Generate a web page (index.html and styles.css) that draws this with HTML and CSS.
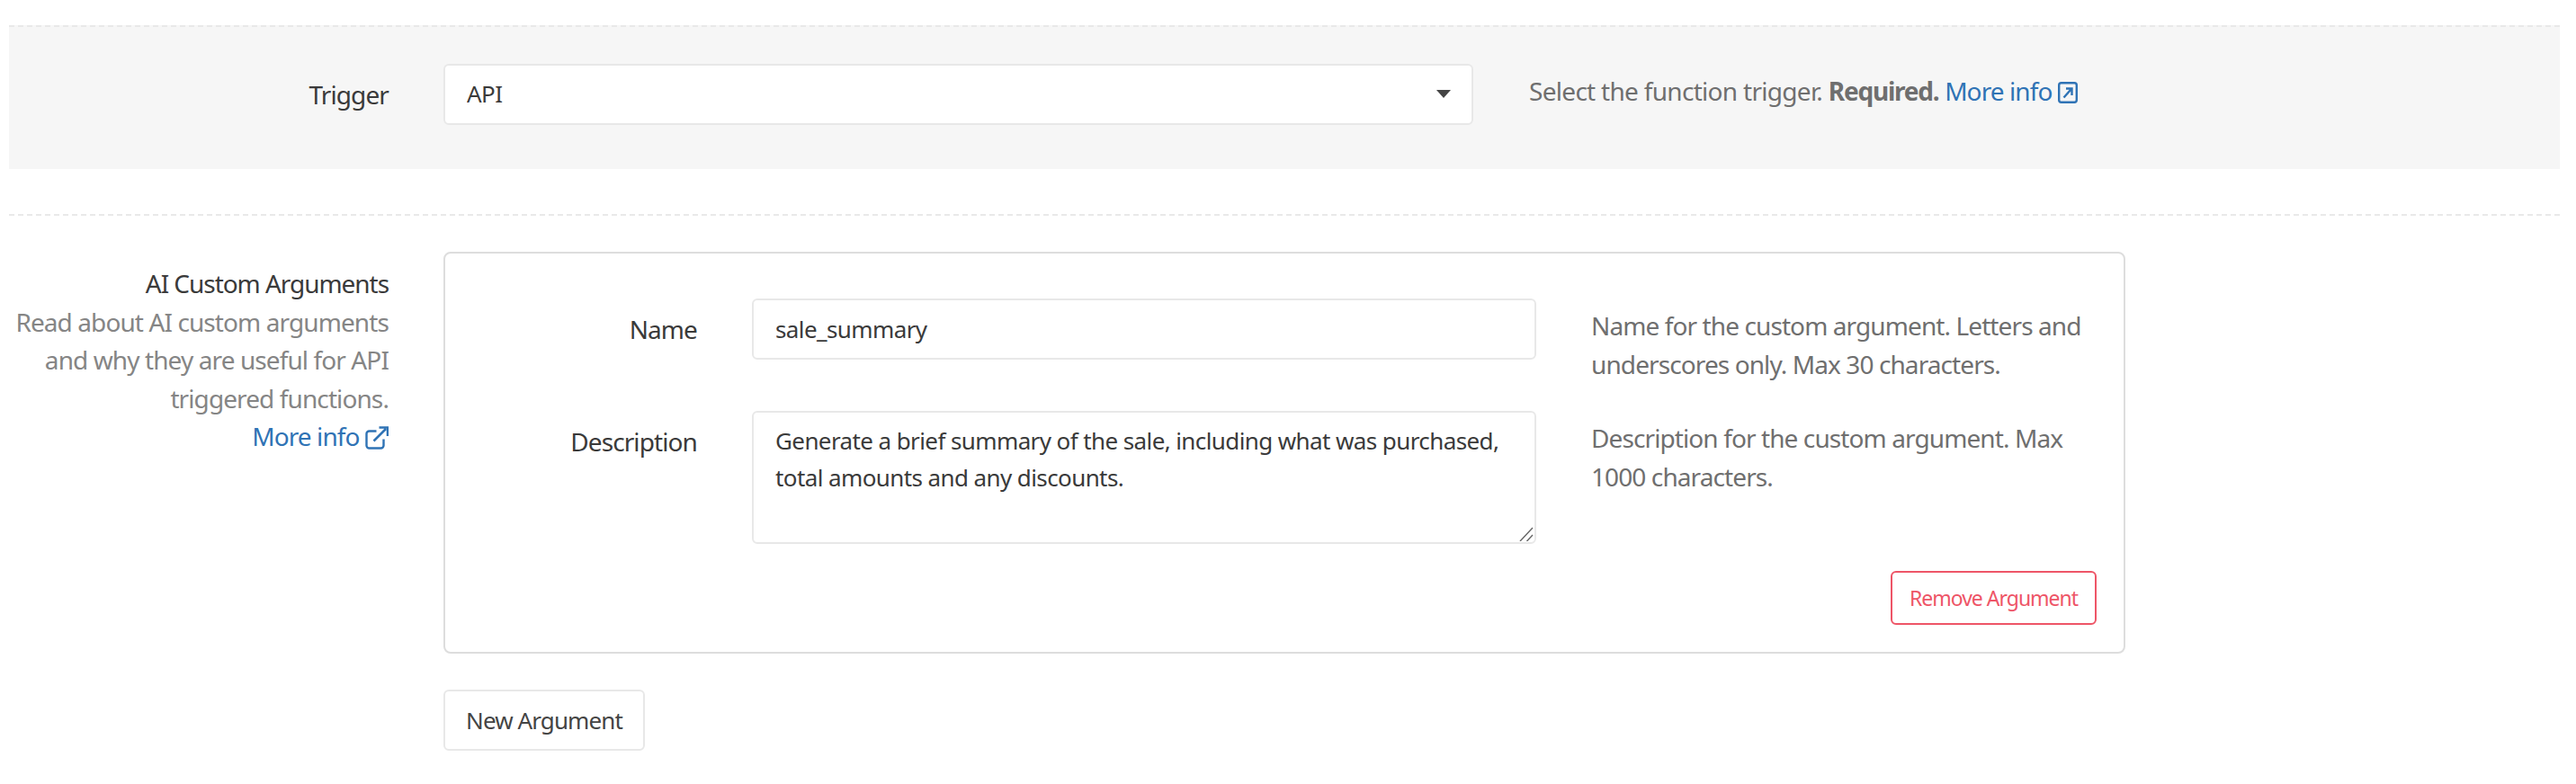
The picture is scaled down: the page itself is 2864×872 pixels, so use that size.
FILE: index.html
```html
<!DOCTYPE html>
<html lang="en">
<head>
<meta charset="utf-8">
<title>Function settings</title>
<link rel="stylesheet" href="styles.css">
</head>
<body>
<section class="row row-panel">
  <label class="side-label" for="trigger">Trigger</label>
  <div class="select-wrap">
    <select id="trigger" class="control control-select"><option>API</option></select>
  </div>
  <p class="help help-top">Select the function trigger. <strong>Required.</strong> <a href="#">More info <svg class="icon-square" viewBox="0 0 22 24" aria-hidden="true"><rect x="1.2" y="1.2" width="19.6" height="21.6" rx="2.5" fill="none" stroke="currentColor" stroke-width="2.4"/><path d="M6.5 17.5 14.5 8.5M9 7.5h6.5V15" fill="none" stroke="currentColor" stroke-width="2.4"/></svg></a></p>
</section>
<section class="row row-args">
  <div class="side-label side-block">
    <div class="side-title">AI Custom Arguments</div>
    <div class="side-note">Read about AI custom arguments and why they are useful for API triggered functions.</div>
    <a href="#">More info <svg class="icon-open" viewBox="0 0 26 26" aria-hidden="true"><path d="M20.5 14.5v7a3 3 0 0 1-3 3H4.5a3 3 0 0 1-3-3V8.5a3 3 0 0 1 3-3h8" fill="none" stroke="currentColor" stroke-width="2.4"/><path d="M9.5 16.5 23 3M15.5 1.5H25V11" fill="none" stroke="currentColor" stroke-width="2.6"/></svg></a>
  </div>
  <div class="args-col">
    <div class="card">
      <div class="field">
        <label class="field-label" for="argname">Name</label>
        <input id="argname" class="control" type="text" value="sale_summary">
        <p class="help">Name for the custom argument. Letters and underscores only. Max 30 characters.</p>
      </div>
      <div class="field field-desc">
        <label class="field-label" for="argdesc">Description</label>
        <div class="area-wrap">
          <textarea id="argdesc" class="control area">Generate a brief summary of the sale, including what was purchased, total amounts and any discounts.</textarea>
          <svg class="grip" viewBox="0 0 16 16" aria-hidden="true"><path d="M1 16 15 1M8.5 16 15 9" fill="none" stroke="#666" stroke-width="1.4"/></svg>
        </div>
        <p class="help">Description for the custom argument. Max 1000 characters.</p>
      </div>
      <div class="card-actions">
        <button class="btn btn-danger" type="button">Remove Argument</button>
      </div>
    </div>
    <button class="btn btn-new" type="button">New Argument</button>
  </div>
</section>
</body>
</html>
```
FILE: styles.css
```css
* { box-sizing: border-box; }
html, body { margin: 0; background: #fff; }
body {
  padding-top: 28px;
  font-family: "Noto Sans", "Open Sans", sans-serif;
  font-size: 28px;
  line-height: 42.6px;
  color: #3a3a3a;
  letter-spacing: -0.9px;
}
a { color: #2f73b5; text-decoration: none; }
.row {
  display: flex;
  align-items: flex-start;
  margin-left: 10px;
  margin-right: 18px;
  border-top: 2px dashed #e9e9e9;
}
.row-panel {
  height: 160px;
  padding-top: 41px;
  background: #f6f6f6;
}
.row-args {
  margin-top: 50px;
  padding-top: 40px;
}
.side-label {
  flex: 0 0 422px;
  margin-right: 61px;
  text-align: right;
}
.row-panel .side-label { padding-top: 13px; }
.side-title { letter-spacing: -1.05px; }
.side-note { color: #858585; }
.side-block { margin-top: 14px; }
.control {
  display: block;
  width: 100%;
  height: 68px;
  padding: 0 24px;
  border: 2px solid #e8e8e8;
  border-radius: 6px;
  background: #fff;
  font: inherit;
  font-size: 26px;
  letter-spacing: -0.6px;
  color: #3a3a3a;
  outline: none;
  appearance: none;
}
.control-select { padding-bottom: 2px; }
.select-wrap {
  position: relative;
  flex: 0 0 1145px;
}
.select-wrap::after {
  content: "";
  position: absolute;
  right: 25px;
  top: 29px;
  border-style: solid;
  border-width: 9px 8px 0;
  border-color: #444 transparent transparent;
}
.help {
  margin: 0;
  color: #6f6f6f;
}
.help-top { margin-left: 62px; padding-top: 9px; letter-spacing: -0.7px; }
.help strong { font-weight: 700; letter-spacing: -1.2px; }
.help a { letter-spacing: -0.9px; }
.icon-square { width: 22px; height: 24px; vertical-align: -3px; }
.icon-open { width: 26px; height: 26px; vertical-align: -4px; }
.args-col { flex: 0 0 1870px; }
.card {
  height: 447px;
  padding: 50px 30px 0 0;
  border: 2px solid #ddd;
  border-radius: 8px;
}
.field {
  display: grid;
  grid-template-columns: 280px 872px 1fr;
  column-gap: 61px;
  align-items: start;
}
.field-desc { margin-top: 31px; }
.field-label {
  padding-top: 13px;
  text-align: right;
}
.field .help { margin-top: 9px; }
.area-wrap { position: relative; }
.area {
  height: 148px;
  padding-top: 11px;
  line-height: 41px;
  resize: none;
}
.grip {
  position: absolute;
  right: 3px;
  bottom: 3px;
  width: 16px;
  height: 16px;
}
.card-actions {
  display: flex;
  justify-content: flex-end;
  margin-top: 30px;
}
.btn {
  display: block;
  background: #fff;
  border-radius: 6px;
  font: inherit;
}
.btn-danger {
  width: 229px;
  height: 60px;
  padding: 0;
  border: 2px solid #ee5567;
  color: #ee5567;
  font-size: 23px;
  letter-spacing: -1px;
}
.btn-new {
  width: 224px;
  height: 68px;
  margin-top: 40px;
  padding: 0;
  border: 2px solid #e8e8e8;
  color: #444;
  font-size: 26px;
  letter-spacing: -0.9px;
}
```
